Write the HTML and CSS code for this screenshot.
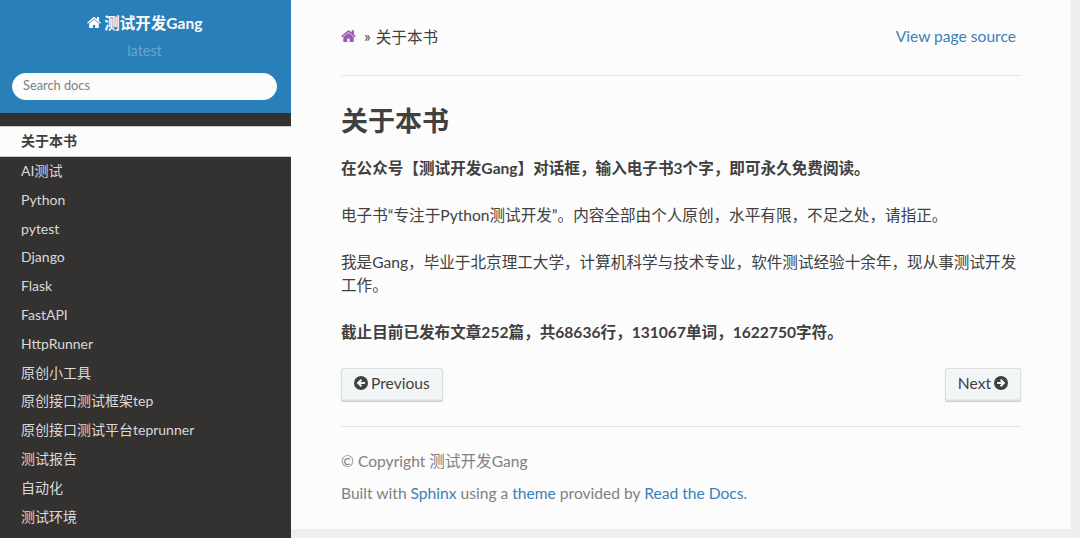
FILE: index.html
```html
<!DOCTYPE html>
<html lang="zh">
<head>
<meta charset="utf-8">
<title>关于本书</title>
<link rel="stylesheet" href="styles.css">
</head>
<body>
<div class="page">
  <nav class="side">
    <div class="brand">
      <a class="title"><svg class="ico-home-w" viewBox="0 0 1664 1408"><path fill="currentColor" d="M1408 768v480q0 26-19 45t-45 19H960V928H704v384H320q-26 0-45-19t-19-45V768q0-1 .5-3t.5-3l575-474 575 474q1 2 1 6zm223-69-62 74q-8 9-21 11h-3q-13 0-21-7L832 200 140 777q-12 8-24 7-13-2-21-11l-62-74q-8-10-7-23.500t11-21.500L756 26q32-26 76-26t76 26l272 227V36q0-14 9-23t23-9h192q14 0 23 9t9 23v454l219 182q10 8 11 21.500t-7 23.500z"/></svg> 测试开发Gang</a>
      <div class="version">latest</div>
      <input class="search" type="text" placeholder="Search docs">
    </div>
    <ul class="menu">
      <li class="current">关于本书</li>
      <li>AI测试</li>
      <li>Python</li>
      <li>pytest</li>
      <li>Django</li>
      <li>Flask</li>
      <li>FastAPI</li>
      <li>HttpRunner</li>
      <li>原创小工具</li>
      <li>原创接口测试框架tep</li>
      <li>原创接口测试平台teprunner</li>
      <li>测试报告</li>
      <li>自动化</li>
      <li>测试环境</li>
    </ul>
  </nav>
  <main class="content">
    <div class="crumbs">
      <span class="crumb-left"><svg class="ico-home-p" viewBox="0 0 1664 1408"><path fill="currentColor" d="M1408 768v480q0 26-19 45t-45 19H960V928H704v384H320q-26 0-45-19t-19-45V768q0-1 .5-3t.5-3l575-474 575 474q1 2 1 6zm223-69-62 74q-8 9-21 11h-3q-13 0-21-7L832 200 140 777q-12 8-24 7-13-2-21-11l-62-74q-8-10-7-23.500t11-21.500L756 26q32-26 76-26t76 26l272 227V36q0-14 9-23t23-9h192q14 0 23 9t9 23v454l219 182q10 8 11 21.500t-7 23.500z"/></svg><span class="sep">»</span>关于本书</span>
      <a class="source">View page source</a>
    </div>
    <hr class="rule">
    <h1>关于本书</h1>
    <p class="strong">在公众号【测试开发Gang】对话框，输入电子书3个字，即可永久免费阅读。</p>
    <p>电子书“专注于Python测试开发”。内容全部由个人原创，水平有限，不足之处，请指正。</p>
    <p>我是Gang，毕业于北京理工大学，计算机科学与技术专业，软件测试经验十余年，现从事测试开发工作。</p>
    <p class="strong">截止目前已发布文章252篇，共68636行，131067单词，1622750字符。</p>
    <div class="pager">
      <a class="btn"><svg class="ico-arrow" viewBox="0 0 16 16"><circle cx="8" cy="8" r="8" fill="currentColor"/><path d="M12.500 8H5M8.500 4.200 4.700 8l3.800 3.800" fill="none" stroke="#f3f6f6" stroke-width="2.400"/></svg>Previous</a>
      <a class="btn">Next<svg class="ico-arrow" viewBox="0 0 16 16"><circle cx="8" cy="8" r="8" fill="currentColor"/><path d="M3.500 8H11M7.500 4.200 11.300 8l-3.800 3.800" fill="none" stroke="#f3f6f6" stroke-width="2.400"/></svg></a>
    </div>
    <hr class="rule foot-rule">
    <footer class="foot">
      <div class="foot-line">© Copyright 测试开发Gang</div>
      <div class="foot-line">Built with <a>Sphinx</a> using a <a>theme</a> provided by <a>Read the Docs</a>.</div>
    </footer>
  </main>
</div>
</body>
</html>
```
FILE: styles.css
```css
* { box-sizing: border-box; }
html, body { margin: 0; height: 100%; overflow: hidden; }
body {
  background: #efefef;
  font-family: Lato, "Noto Sans CJK SC", sans-serif;
  color: #404040;
  font-size: 15.600px;
}
.page { display: flex; height: 538px; align-items: flex-start; }
.side { width: 291px; height: 538px; background: #343131; flex: none; overflow: hidden; }
.brand {
  background: #2980b9;
  height: 113px;
  padding: 12px 14px 0 12px;
  text-align: center;
  color: #fcfcfc;
}
.title { display: block; font-size: 15.500px; font-weight: 700; line-height: 22px; }
.ico-home-w { width: 14px; height: 12px; }
.version { color: rgba(255, 255, 255, .3); font-size: 14.400px; line-height: 20px; margin-top: 7px; }
.search {
  display: block;
  width: 265px;
  height: 27px;
  margin-top: 12px;
  border: 1px solid #fcfcfc;
  border-radius: 14px;
  padding: 0 10px 3px;
  font: 12.800px Lato, sans-serif;
  background: #fcfcfc;
  color: #404040;
}
.search::placeholder { color: #808080; opacity: 1; }
.menu { list-style: none; margin: 13px 0 0; padding: 0; }
.menu li {
  height: 28.800px;
  line-height: 28.600px;
  padding-left: 21px;
  font-size: 14px;
  color: #d9d9d9;
}
.menu .current {
  height: 31px;
  line-height: 27px;
  background: #fcfcfc;
  color: #404040;
  font-weight: 700;
  border-top: 1px solid #c9c9c9;
  border-bottom: 1px solid #c9c9c9;
}
.content {
  width: 780px;
  height: 529px;
  background: #fcfcfc;
  padding: 0 50px;
  flex: none;
}
.crumbs { display: flex; justify-content: space-between; align-items: center; height: 24px; margin-top: 24px; padding-right: 5px; }
.crumb-left { display: flex; align-items: center; }
.ico-home-p { width: 15px; height: 13px; color: #9b59b6; margin-right: 8px; }
.sep { margin-right: 5px; }
.source { color: #3a80b8; }
.rule { border: 0; border-top: 1px solid #e1e4e5; margin: 0; }
.crumbs + .rule { margin-top: 27px; }
h1 { font-size: 27px; line-height: 36px; font-weight: 700; margin: 27px 0 0; color: #404040; }
p { margin: 0 0 24px; line-height: 23px; }
h1 + p { margin-top: 18px; }
.strong { font-weight: 700; }
.pager { display: flex; justify-content: space-between; margin-top: -.5px; }
.btn {
  display: flex;
  align-items: center;
  gap: 3px;
  height: 33px;
  padding: 0 12px 2px;
  background: #f3f6f6;
  color: #404040;
  border: 1px solid #dcdfe0;
  box-shadow: inset 0 -1px 0 rgba(0, 0, 0, .05), 0 1px 1px rgba(0, 0, 0, .2);
  border-radius: 2px;
}
.ico-arrow { width: 14px; height: 14px; }
.foot-rule { margin-top: 25px; }
.foot { margin-top: 22px; color: #808080; }
.foot-line { line-height: 24px; margin-bottom: 8px; }
.foot a { color: #3a80b8; }
```
